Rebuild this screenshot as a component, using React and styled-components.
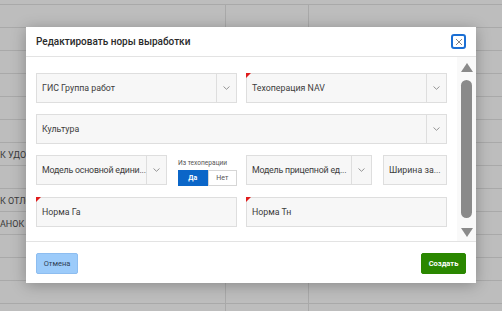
import React from 'react';
import styled, { createGlobalStyle } from 'styled-components';

const GlobalStyle = createGlobalStyle`
  html, body {
    margin: 0;
    padding: 0;
    width: 502px;
    height: 311px;
    overflow: hidden;
    background: #bdbdbd;
    font-family: Roboto, "Noto Sans", sans-serif;
  }
`

const Page = styled.div`
  position: relative;
  width: 502px;
  height: 311px;
  overflow: hidden;
  background: #bdbdbd;
`

const Grid = styled.div`
  display: flex;
  flex-direction: column;
  padding-top: 4px;
`

const GridRow = styled.div`
  display: grid;
  grid-template-columns: 226px 83px 1fr;
  height: 22px;
  border-top: 1px solid #a9a9a9;
`

const GridCell = styled.div`
  border-right: ${(props) => props.last ? 'none' : '1px solid #a9a9a9'};
  font-size: 9px;
  color: #3a3a3a;
  line-height: 24px;
  white-space: nowrap;
  overflow: hidden;
`

const Dialog = styled.div`
  position: absolute;
  left: 26px;
  top: 27px;
  width: 450px;
  height: 256px;
  background: #fff;
  box-shadow: 0 2px 14px rgba(0, 0, 0, 0.28);
  display: flex;
  flex-direction: column;
`

const Header = styled.div`
  height: 29px;
  border-bottom: 1px solid #e3e3e3;
  display: flex;
  align-items: center;
  justify-content: space-between;
  padding: 0 10px;
`

const Title = styled.div`
  font-size: 10px;
  font-weight: 500;
  color: #2a2a2a;
`

const CloseButton = styled.div`
  width: 11px;
  height: 11px;
  border: 2px solid #1b6fd4;
  border-radius: 3px;
  display: flex;
  align-items: center;
  justify-content: center;
`

const Body = styled.div`
  height: 184px;
  display: flex;
  border-bottom: 1px solid #e3e3e3;
`

const Form = styled.div`
  flex: 1;
  padding: 16px 10px 0 10px;
  display: flex;
  flex-direction: column;
  gap: 11px;
`

const Row = styled.div`
  display: flex;
  gap: ${(props) => props.gap || 9}px;
  align-items: flex-start;
`

const Field = styled.div`
  position: relative;
  width: ${(props) => props.width ? `${props.width}px` : 'auto'};
  flex: ${(props) => props.width ? 'none' : 1};
  height: 28px;
  border: 1px solid #dedede;
  background: #f7f7f7;
  display: flex;
  box-sizing: content-box;
`

const FieldText = styled.div`
  flex: 1;
  min-width: 0;
  padding: 0 1px 0 5px;
  font-size: 8.8px;
  letter-spacing: ${(props) => props.tight ? '-0.2px' : 'normal'};
  line-height: 28px;
  color: #3c3c3c;
  white-space: nowrap;
  overflow: hidden;
`

const Arrow = styled.div`
  width: 19px;
  border-left: 1px solid #dedede;
  display: flex;
  align-items: center;
  justify-content: center;
`

const Required = styled.div`
  position: absolute;
  left: -1px;
  top: -1px;
  width: 0;
  height: 0;
  border-top: 5px solid #e01b1b;
  border-right: 5px solid transparent;
`

const Toggle = styled.div`
  width: 59px;
  display: flex;
  flex-direction: column;
  gap: 2px;
`

const ToggleLabel = styled.div`
  font-size: 6.6px;
  color: #555;
  line-height: 10px;
  margin-top: 3px;
`

const ToggleGroup = styled.div`
  display: flex;
  height: 16px;
`

const ToggleButton = styled.div`
  flex: 1;
  display: flex;
  align-items: center;
  justify-content: center;
  font-size: 7px;
  font-weight: ${(props) => props.active ? 700 : 400};
  color: ${(props) => props.active ? '#fff' : '#555'};
  background: ${(props) => props.active ? '#0b66c8' : '#fff'};
  border: 1px solid ${(props) => props.active ? '#0b66c8' : '#d6d6d6'};
  box-sizing: border-box;
`

const ScrollTrack = styled.div`
  width: 19px;
  background: #f9f9f9;
  display: flex;
  flex-direction: column;
  align-items: center;
  padding: 6px 0 4px 0;
`

const Thumb = styled.div`
  width: 11px;
  flex: 1;
  margin: 8px 0 10px 0;
  border-radius: 6px;
  background: #8a8a8a;
`

const Footer = styled.div`
  flex: 1;
  display: flex;
  justify-content: space-between;
  align-items: flex-start;
  padding: 11px 10px 0 10px;
`

const Button = styled.div`
  height: 21px;
  width: ${(props) => props.primary ? 45 : 42}px;
  display: flex;
  align-items: center;
  justify-content: center;
  font-size: 7.5px;
  font-weight: ${(props) => props.primary ? 700 : 400};
  color: ${(props) => props.primary ? '#fff' : '#2f3f55'};
  background: ${(props) => props.primary ? '#2a8700' : '#9ccbfa'};
  border: 1px solid ${(props) => props.primary ? '#2a8700' : '#8dbdf0'};
  border-radius: 2px;
  box-sizing: border-box;
`

const Chevron = () => (
  <svg width="7" height="4" viewBox="0 0 7 4">
    <path d="M0.5 0.5 L3.5 3.3 L6.5 0.5" fill="none" stroke="#8a8a8a" strokeWidth="0.9" />
  </svg>
)

const Triangle = ({ down }) => (
  <svg width="12" height="9" viewBox="0 0 12 9">
    <path d={down ? 'M0 0 L12 0 L6 9 Z' : 'M6 0 L12 9 L0 9 Z'} fill="#8a8a8a" />
  </svg>
)

const bgRows = [
  '', '', '', '', '', '', 'К УДОБ', '', 'К ОТЛО', 'АНОК Д', '', '', '', '',
]

const SelectField = ({ label, width, required, tight }) => (
  <Field width={width}>
    {required && <Required />}
    <FieldText tight={tight}>{label}</FieldText>
    <Arrow><Chevron /></Arrow>
  </Field>
)

const InputField = ({ label, width, required }) => (
  <Field width={width}>
    {required && <Required />}
    <FieldText>{label}</FieldText>
  </Field>
)

const App = () => {
  return (
    <Page>
      <GlobalStyle />
      <Grid>
        {bgRows.map((text, i) => (
          <GridRow key={i}>
            <GridCell>{text}</GridCell>
            <GridCell />
            <GridCell last />
          </GridRow>
        ))}
      </Grid>

      <Dialog>
        <Header>
          <Title>Редактировать норы выработки</Title>
          <CloseButton>
            <svg width="8" height="8" viewBox="0 0 8 8">
              <path d="M1 1 L7 7 M7 1 L1 7" stroke="#777" strokeWidth="0.9" />
            </svg>
          </CloseButton>
        </Header>

        <Body>
          <Form>
            <Row>
              <SelectField label="ГИС Группа работ" width={199} />
              <SelectField label="Техоперация NAV" width={199} required />
            </Row>
            <Row>
              <SelectField label="Культура" />
            </Row>
            <Row>
              <Row gap={11}>
                <SelectField label="Модель основной едини..." width={129} tight />
                <Toggle>
                  <ToggleLabel>Из техоперации</ToggleLabel>
                  <ToggleGroup>
                    <ToggleButton active>Да</ToggleButton>
                    <ToggleButton>Нет</ToggleButton>
                  </ToggleGroup>
                </Toggle>
              </Row>
              <Row gap={11}>
                <SelectField label="Модель прицепной ед..." width={124} tight />
                <InputField label="Ширина за..." width={62} />
              </Row>
            </Row>
            <Row>
              <InputField label="Норма Га" width={199} required />
              <InputField label="Норма Тн" width={199} required />
            </Row>
          </Form>
          <ScrollTrack>
            <Triangle />
            <Thumb />
            <Triangle down />
          </ScrollTrack>
        </Body>

        <Footer>
          <Button>Отмена</Button>
          <Button primary>Создать</Button>
        </Footer>
      </Dialog>
    </Page>
  );
};

export default App;
